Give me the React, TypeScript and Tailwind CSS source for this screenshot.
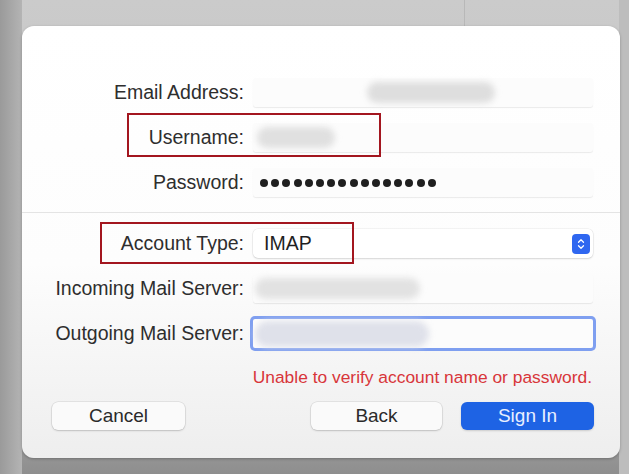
import { ChevronUp, ChevronDown } from "lucide-react";

const font = { fontFamily: '"Liberation Sans", Arial, sans-serif' };

const Blob = ({ className }: { className: string }) => (
  <div className={`absolute rounded-full blur-[3px] ${className}`} />
);

const Field = ({ children, focused }: { children?: React.ReactNode; focused?: boolean }) => (
  <div
    className={
      focused
        ? "relative h-[29px] w-[340px] rounded-[2px] bg-[#fcfcfc] shadow-[0_0_0_3px_#7f9ff0]"
        : "relative h-[29px] w-[340px] rounded-[3px] bg-[#fcfcfc] shadow-[0_1px_1px_rgba(0,0,0,0.08)]"
    }
  >
    {children}
  </div>
);

const Label = ({ text }: { text: string }) => (
  <div className="flex h-[29px] items-center justify-end whitespace-nowrap text-[19.5px] text-[#2e2e2e]">
    {text}
  </div>
);

export default function App() {
  const dots = Array.from({ length: 16 });

  return (
    <div
      style={font}
      className="relative h-[474px] w-[629px] overflow-hidden bg-[linear-gradient(180deg,#cbcbcb_0%,#c4c4c4_40%,#a9a9a9_85%,#8e8e8e_100%)]"
    >
      {/* background strips */}
      <div className="absolute left-0 top-0 h-full w-[22px] bg-[linear-gradient(90deg,#9a9a9a,#b4b4b4)]" />
      <div className="absolute right-0 top-0 h-full w-[10px] bg-[#bdbdbd]" />
      <div className="absolute left-[464px] top-0 h-[28px] w-px bg-[#b8b8b8]" />

      <div className="absolute left-[22px] top-[26px] h-[432px] w-[598px] rounded-[12px] bg-[linear-gradient(180deg,#ffffff_0%,#fdfdfd_55%,#eeeeee_100%)] shadow-[0_1px_3px_rgba(0,0,0,0.25)]">
        <div className="grid grid-cols-[222px_340px] gap-x-[9px] gap-y-[16px] pt-[52px]">
          <Label text="Email Address:" />
          <Field>
            <Blob className="left-[114px] top-[4px] h-[21px] w-[128px] bg-[#dedede]" />
          </Field>
          <Label text="Username:" />
          <Field>
            <Blob className="left-[4px] top-[4px] h-[21px] w-[78px] bg-[#e0e0e0]" />
          </Field>
          <Label text="Password:" />
          <Field>
            <div className="flex h-full items-center gap-[3.2px] pl-[7px]">
              {dots.map((_, i) => (
                <span key={i} className="h-[8px] w-[8px] rounded-full bg-[#1f1f1f]" />
              ))}
            </div>
          </Field>
        </div>

        <div className="mt-[15px] h-px w-full bg-[#e4e4e4]" />

        <div className="mt-[16px] grid grid-cols-[222px_340px] gap-x-[9px] gap-y-[16px]">
          <Label text="Account Type:" />
          <div className="flex h-[29px] w-[340px] items-center justify-between rounded-[5px] bg-white pl-[11px] pr-[3px] shadow-[0_0_0_0.5px_rgba(0,0,0,0.08),0_1px_2px_rgba(0,0,0,0.12)]">
            <span className="text-[19.5px] text-[#1f1f1f]">IMAP</span>
            <div className="flex h-[20px] w-[18px] flex-col items-center justify-center rounded-[4px] bg-[#2f67f0] text-white">
              <ChevronUp size={10} strokeWidth={3} className="-mb-[2px]" />
              <ChevronDown size={10} strokeWidth={3} className="-mt-[2px]" />
            </div>
          </div>
          <Label text="Incoming Mail Server:" />
          <Field>
            <Blob className="left-[2px] top-[4px] h-[21px] w-[165px] bg-[#e2e2e2]" />
          </Field>
          <Label text="Outgoing Mail Server:" />
          <Field focused>
            <Blob className="left-[2px] top-[2px] h-[26px] w-[174px] bg-[#dfe1ea]" />
          </Field>
        </div>

        <div className="mt-[16px] pr-[28px] text-right text-[17.4px] text-[#d8363a]">
          Unable to verify account name or password.
        </div>

        <div className="mt-[12px] flex items-center pl-[30px] pr-[26px]">
          <button className="h-[28px] w-[133px] rounded-[6px] bg-[#fafafa] text-[19px] text-[#2a2a2a] shadow-[0_0_0_0.5px_rgba(0,0,0,0.12),0_1px_2px_rgba(0,0,0,0.15)]">
            Cancel
          </button>
          <div className="flex-1" />
          <button className="h-[28px] w-[131px] rounded-[6px] bg-[#fafafa] text-[19px] text-[#2a2a2a] shadow-[0_0_0_0.5px_rgba(0,0,0,0.12),0_1px_2px_rgba(0,0,0,0.15)]">
            Back
          </button>
          <button className="ml-[19px] h-[28px] w-[133px] rounded-[6px] bg-[#1e63e4] text-[19px] text-[#e8efff] shadow-[0_1px_2px_rgba(0,0,0,0.15)]">
            Sign In
          </button>
        </div>
      </div>

      {/* red highlight boxes */}
      <div className="absolute left-[127px] top-[113px] h-[44px] w-[254px] border-2 border-[#a3161f]" />
      <div className="absolute left-[100px] top-[222px] h-[42px] w-[254px] border-2 border-[#a3161f]" />
    </div>
  );
}
